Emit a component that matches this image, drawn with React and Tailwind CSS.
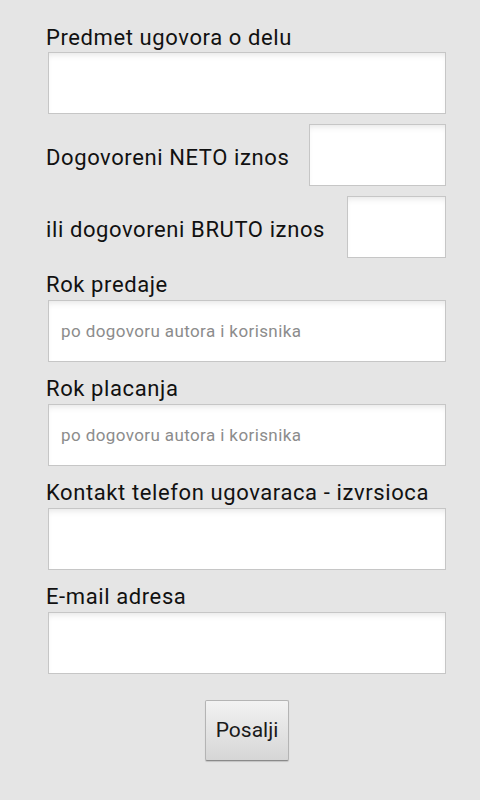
const FONT = { fontFamily: 'Roboto, "Noto Sans", sans-serif' };

const inputCls =
  'h-[62px] border border-[#c6c6c6] bg-white shadow-[inset_0_5px_6px_-3px_rgba(0,0,0,0.10)] flex items-center px-[12px] text-[17px] tracking-[0.4px] text-[#8c8c8c] outline-none';

function Label({ children }) {
  return <div className="text-[22px] tracking-[0.6px] leading-[26px] text-[#111]">{children}</div>;
}

function Field({ label, placeholder, first }) {
  return (
    <div className={first ? '' : 'mt-[14px]'}>
      <Label>{label}</Label>
      <input
        className={`${inputCls} w-[398px] ml-[2px] mt-[2px] placeholder:text-[#8c8c8c]`}
        placeholder={placeholder}
        style={FONT}
      />
    </div>
  );
}

function InlineField({ label, width }) {
  return (
    <div className="flex items-center justify-between mt-[10px]">
      <div className="mt-[6px]">
        <Label>{label}</Label>
      </div>
      <input className={`${inputCls} ${width}`} style={FONT} />
    </div>
  );
}

export default function App() {
  return (
    <div className="w-[480px] h-[800px] bg-[#e5e5e5] pl-[46px] pr-[34px] pt-[24px]" style={FONT}>
      <div className="mt-[1px]">
        <Label>Predmet ugovora o delu</Label>
        <input className={`${inputCls} w-[398px] ml-[2px] mt-[1px]`} style={FONT} />
      </div>

      <InlineField label="Dogovoreni NETO iznos" width="w-[137px]" />
      <InlineField label="ili dogovoreni BRUTO iznos" width="w-[99px]" />

      <Field label="Rok predaje" placeholder="po dogovoru autora i korisnika" />
      <Field label="Rok placanja" placeholder="po dogovoru autora i korisnika" />
      <Field label="Kontakt telefon ugovaraca - izvrsioca" />
      <Field label="E-mail adresa" />

      <div className="flex justify-center ml-[2px] w-[398px] mt-[26px]">
        <button
          className="w-[84px] h-[61px] rounded-[2px] border border-[#b4b4b4] border-b-[#8a8a8a] bg-gradient-to-b from-[#f2f2f2] to-[#d6d6d6] shadow-[0_1px_1px_rgba(0,0,0,0.15)] text-[21px] text-[#1a1a1a]"
          style={FONT}
        >
          Posalji
        </button>
      </div>
    </div>
  );
}
